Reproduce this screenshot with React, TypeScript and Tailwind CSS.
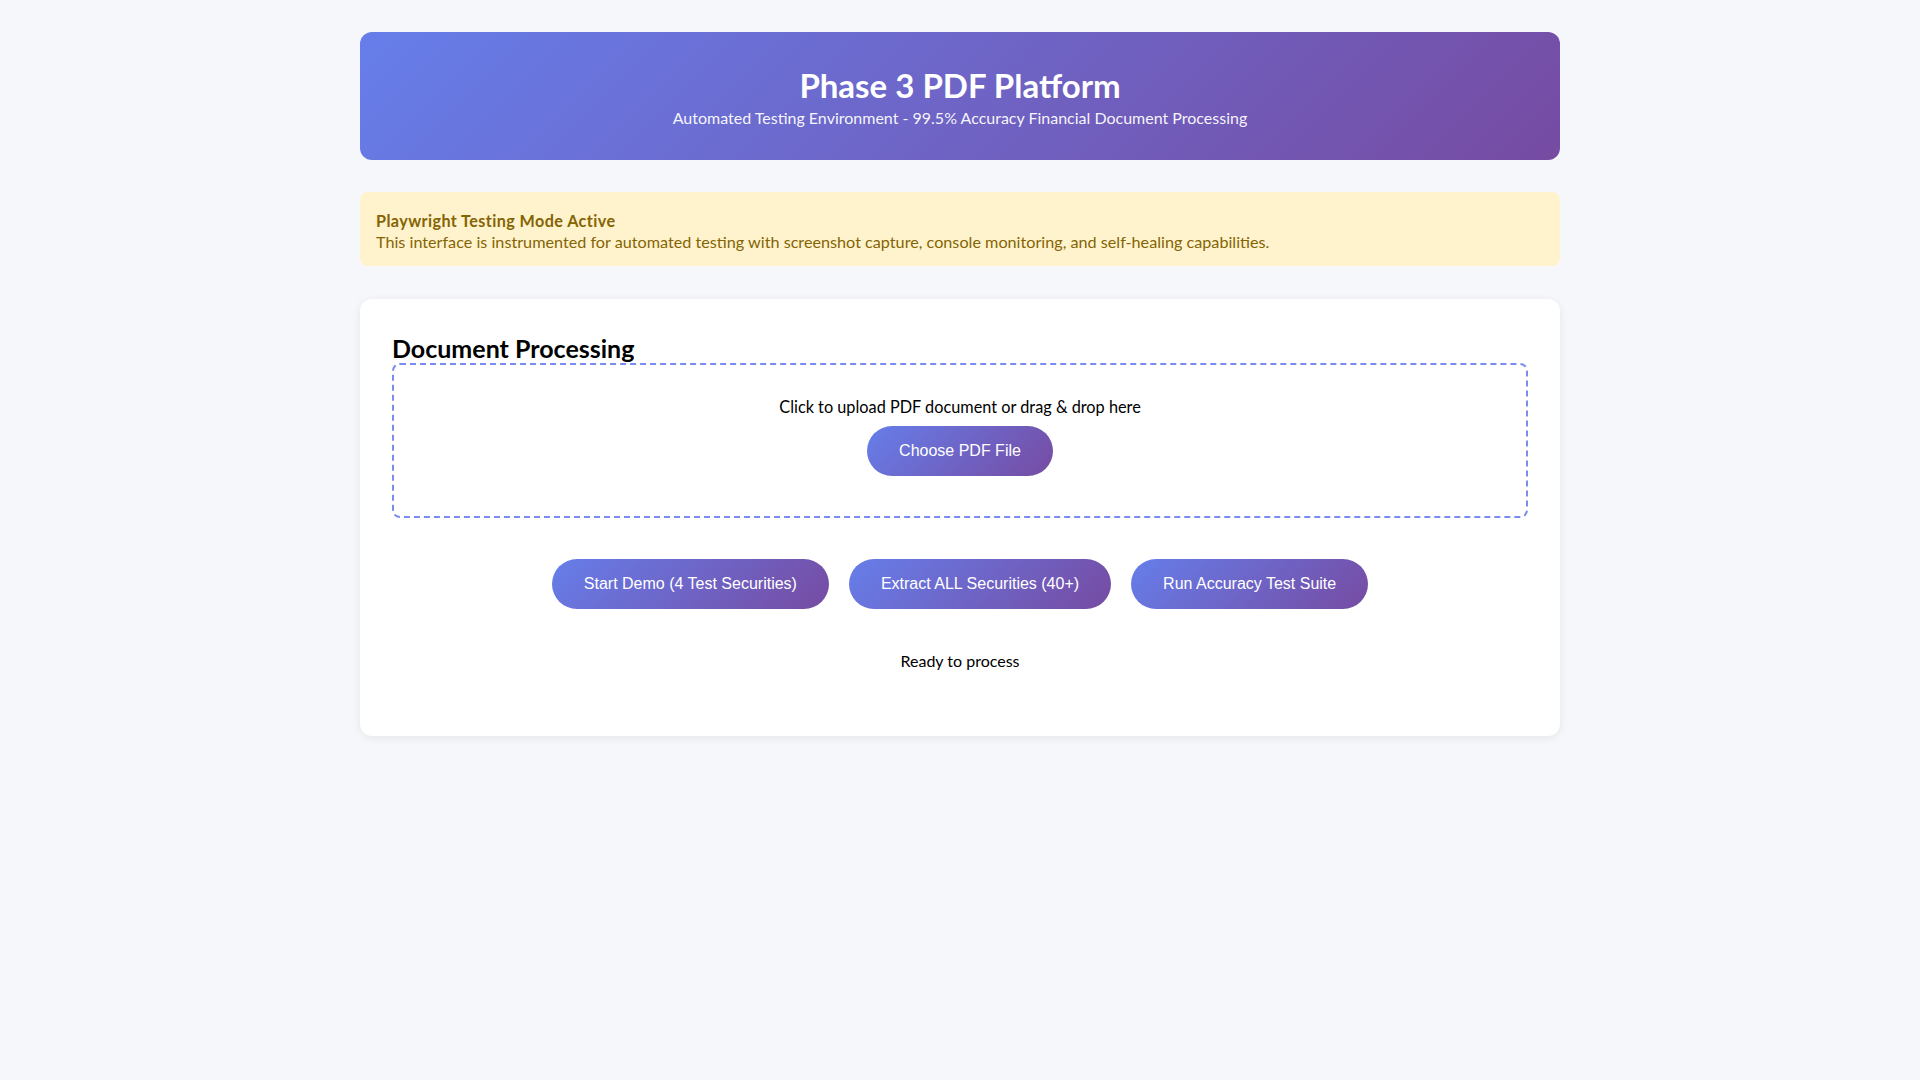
import React from "react";

const actions = [
  "Start Demo (4 Test Securities)",
  "Extract ALL Securities (40+)",
  "Run Accuracy Test Suite",
];

function GradientButton({ label }: { label: string }) {
  return (
    <button
      type="button"
      className="rounded-full bg-[linear-gradient(135deg,#667eea_0%,#764ba2_100%)] px-8 py-[15px] text-[16px] leading-[20px] text-white font-['Liberation_Sans',Arial,sans-serif]"
    >
      {label}
    </button>
  );
}

export default function App() {
  return (
    <div className="min-h-screen bg-[#f5f7fa] pt-8 font-['Segoe_UI',Lato,sans-serif] text-black">
      <div className="mx-auto max-w-[1200px]">
        {/* header */}
        <header className="flex h-[128px] flex-col items-center justify-center rounded-xl bg-[linear-gradient(135deg,#667eea_0%,#764ba2_100%)] pt-[2px] text-white">
          <h1 className="text-[33px] font-bold leading-[38px]">Phase 3 PDF Platform</h1>
          <p className="mt-[3px] text-[16px] leading-[22px] text-white/95">
            Automated Testing Environment - 99.5% Accuracy Financial Document Processing
          </p>
        </header>

        {/* testing notice */}
        <div className="mt-8 rounded-lg bg-[#fff3cd] px-4 pb-[14px] pt-[18px] text-[16.2px] leading-[21px] text-[#856404]">
          <p className="font-bold tracking-[0.4px]">Playwright Testing Mode Active</p>
          <p>
            This interface is instrumented for automated testing with screenshot capture, console
            monitoring, and self-healing capabilities.
          </p>
        </div>

        {/* main card */}
        <section className="mt-[33px] rounded-xl bg-white px-8 pb-[63px] pt-[34px] shadow-[0_2px_10px_rgba(0,0,0,0.07)]">
          <h2 className="text-[25px] font-bold leading-[30px]">Document Processing</h2>

          <div className="flex flex-col items-center rounded-lg border-2 border-dashed border-[#7b8cef] pb-[40px] pt-[30px]">
            <p className="text-[16.3px] leading-6">Click to upload PDF document or drag &amp; drop here</p>
            <div className="mt-[7px]">
              <GradientButton label="Choose PDF File" />
            </div>
          </div>

          <div className="mt-[41px] flex justify-center gap-5">
            {actions.map((a) => (
              <GradientButton key={a} label={a} />
            ))}
          </div>

          <p className="mt-10 text-center text-[16px] leading-6">Ready to process</p>
        </section>
      </div>
    </div>
  );
}
